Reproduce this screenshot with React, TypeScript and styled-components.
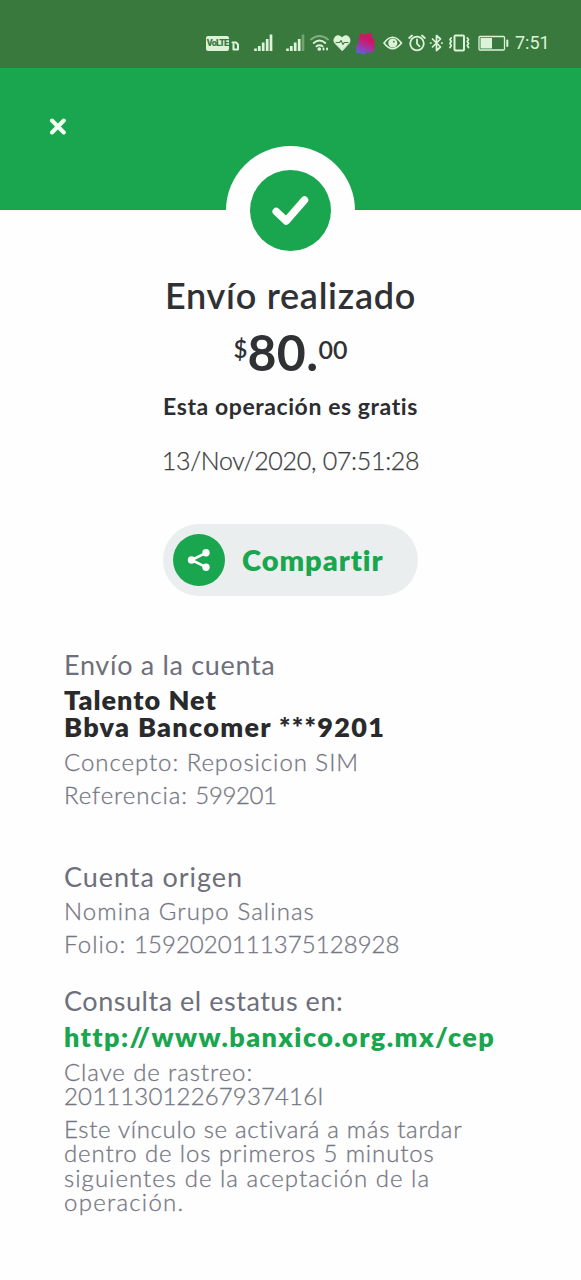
import React from "react";
import styled, { createGlobalStyle } from "styled-components";

const GREEN = "#19a64f";
const PALE = "#dcf3d8";

const Global = createGlobalStyle`
  body { margin: 0; background: #fefefe; font-family: Lato, "Open Sans", sans-serif; }
`;

const Screen = styled.div`
  display: flex;
  flex-direction: column;
  height: 1280px;
  overflow: hidden;
`;

const StatusBar = styled.div`
  display: flex;
  align-items: flex-start;
  box-sizing: border-box;
  height: 68px;
  padding: 19px 0 0 206px;
  background: #39793d;
`;

const Glyph = styled.svg<{ $gap?: number }>`
  display: block;
  flex: none;
  margin-left: ${(p) => p.$gap ?? 0}px;
  margin-top: 12px;
  fill: none;
  stroke: ${PALE};
  stroke-linecap: round;
  stroke-linejoin: round;
`;

const BarsGlyph = styled(Glyph)`
  stroke-linecap: butt;
`;

const VolteTag = styled.span`
  flex: none;
  width: 23px;
  height: 15px;
  margin-top: 17px;
  border-radius: 2px;
  background: ${PALE};
  color: #39793d;
  font: 900 9px/15px Roboto, sans-serif;
  letter-spacing: -0.8px;
  text-align: center;
  white-space: nowrap;
`;

const Clock = styled.span`
  margin: 13px 0 0 6px;
  color: ${PALE};
  font: 400 18px/22px Roboto, sans-serif;
`;

const Header = styled.header`
  position: relative;
  box-sizing: border-box;
  height: 142px;
  padding: 50px 0 0 49px;
  background: ${GREEN};
`;

const CloseButton = styled.button`
  display: block;
  padding: 0;
  border: 0;
  background: none;
`;

const Badge = styled.div`
  position: absolute;
  left: 50%;
  bottom: -65px;
  display: flex;
  align-items: center;
  justify-content: center;
  width: 129px;
  height: 129px;
  margin-left: -65px;
  border-radius: 50%;
  background: #fefefe;
`;

const BadgeDisc = styled.div`
  width: 81px;
  height: 81px;
  border-radius: 50%;
  background: ${GREEN};
`;

const Summary = styled.section`
  display: flex;
  flex-direction: column;
  align-items: center;
  padding-top: 63px;
`;

type LineProps = { $size: number; $line: number; $gap?: number; $track?: number };

const Line = styled.p<LineProps>`
  margin: ${(p) => p.$gap ?? 0}px 0 0;
  font-size: ${(p) => p.$size}px;
  line-height: ${(p) => p.$line}px;
  letter-spacing: ${(p) => p.$track ?? 0}px;
  white-space: nowrap;
`;

const Digits = styled.span<{ $track: number }>`
  letter-spacing: ${(p) => p.$track}px;
`;

const Title = styled(Line)`
  color: #303134;
  font-weight: 600;
`;

const Strong = styled(Line)`
  color: #2c2d30;
  font-weight: 700;
`;

const Stamp = styled(Line)`
  color: #3c3d41;
  font-weight: 300;
  -webkit-text-stroke: 0.25px currentColor;
`;

const Amount = styled.div`
  display: flex;
  align-items: flex-start;
  height: 60px;
  margin-top: 5px;
  color: #303134;
`;

const Units = styled.span`
  font-size: 50px;
  font-weight: 700;
  line-height: 60px;
  letter-spacing: 0.4px;
`;

const Small = styled.span<{ $size: number; $top: number }>`
  margin-top: ${(p) => p.$top}px;
  font-size: ${(p) => p.$size}px;
  font-weight: 600;
  line-height: 30px;
`;

const ShareButton = styled.button`
  display: flex;
  align-items: center;
  box-sizing: border-box;
  width: 255px;
  height: 72px;
  margin: 49px 0 0;
  padding: 0 0 0 10px;
  border: 0;
  border-radius: 36px;
  background: #eaeeee;
`;

const ShareDisc = styled.span`
  display: flex;
  align-items: center;
  justify-content: center;
  width: 52px;
  height: 52px;
  border-radius: 50%;
  background: ${GREEN};
`;

const ShareLabel = styled.span`
  margin-left: 17px;
  color: ${GREEN};
  font: 800 29px/36px Lato, sans-serif;
  letter-spacing: 0.95px;
`;

const Details = styled.main`
  display: flex;
  flex-direction: column;
  align-items: flex-start;
  padding: 53px 0 0 64px;
`;

const Heading = styled(Line)`
  color: #6d6f7b;
  font-weight: 400;
`;

const Name = styled(Line)`
  color: #2a2a2c;
  font-weight: 800;
`;

const Body = styled(Line)`
  color: #757783;
  font-weight: 300;
  -webkit-text-stroke: 0.3px currentColor;
`;

const Link = styled(Line)`
  color: ${GREEN};
  font-weight: 800;
`;

function Signal({ gap, dimLast }: { gap: number; dimLast?: boolean }) {
  return (
    <BarsGlyph $gap={gap} width="19" height="24" viewBox="0 0 19 24" strokeWidth="2.7">
      <path d="M1.500 20v-2.500M5.300 20v-5M9.200 20v-8.500M13.200 20V8" />
      <path d="M17 20V3.500" opacity={dimLast ? 0.35 : 1} />
    </BarsGlyph>
  );
}

function StatusIcons() {
  return (
    <>
      <VolteTag>VoLTE</VolteTag>
      <Glyph $gap={2} width="9" height="24" viewBox="0 0 9 24" strokeWidth="2">
        <path d="M1.500 11.500h3.500l2 2v5H2.500v-5" />
      </Glyph>
      <Signal gap={14} />
      <Signal gap={13} dimLast />
      <Glyph $gap={5} width="20" height="24" viewBox="0 0 20 24" strokeWidth="1.900">
        <path d="M1 8.500Q9.500 1.500 18 8.500" opacity="0.45" />
        <path d="M3.700 12q5.800-5 11.600 0M6.500 15.300q3-2.300 6 0" />
        <circle cx="9.300" cy="18" r="0.900" />
        <path d="M13.500 17.500v1M17 17.500v1" />
      </Glyph>
      <Glyph $gap={3} width="18" height="24" viewBox="0 0 18 24" strokeWidth="1">
        <path d="M9 19.500 2 12.300C-1 8.500 3 2.500 7.500 5.500L9 6.800l1.500-1.300C15 2.500 19 8.500 16 12.300Z" fill={PALE} />
        <path d="M3 11.500h3.500L8 9.500l2 4 1.300-2H15" stroke="#39793d" strokeWidth="1.100" />
      </Glyph>
      <Glyph $gap={4} width="21" height="26" viewBox="0 0 21 26">
        <defs>
          <linearGradient id="app" x1="0.65" y1="0" x2="0.25" y2="1">
            <stop offset="0.3" stopColor="#cc1765" />
            <stop offset="0.62" stopColor="#a633a0" />
            <stop offset="1" stopColor="#5865dc" />
          </linearGradient>
        </defs>
        <path d="M4.500 2.500 10 3.500 16 1.500l1 4.500 2.500 3v10l-3 3-4-1-3 2.500L1 21.500V15l3-3.500L2.500 8 5 6Z" fill="url(#app)" stroke="none" />
      </Glyph>
      <Glyph $gap={7} width="20" height="24" viewBox="0 0 20 24" strokeWidth="1.700">
        <path d="M1 12Q9.500 0.500 18.500 12 9.500 23.500 1 12Z" />
        <circle cx="9.800" cy="12" r="3.700" fill={PALE} />
        <circle cx="10.800" cy="10.700" r="0.900" fill="#39793d" stroke="none" />
      </Glyph>
      <Glyph $gap={5} width="18" height="24" viewBox="0 0 18 24" strokeWidth="1.800">
        <circle cx="9" cy="12.500" r="6.800" />
        <path d="M9 8.500v4.200l2.500 2.600M1.200 7 4 4.500M16.800 7 14 4.500" />
      </Glyph>
      <Glyph $gap={3} width="15" height="24" viewBox="0 0 15 24" strokeWidth="1.700">
        <path d="M3.500 8l8 8L7.500 19.500v-15L11.500 8l-8 8M1.500 12h0.500M12.700 12h0.500" />
      </Glyph>
      <Glyph $gap={4} width="23" height="24" viewBox="0 0 23 24" strokeWidth="2">
        <rect x="6.500" y="4.500" width="9.500" height="15" rx="1" />
        <path d="M3.200 7 2 8.500l1.200 2-1.200 2 1.200 2-1.200 2M19.300 7l1.200 1.500-1.200 2 1.200 2-1.200 2 1.200 2" strokeWidth="1.800" />
      </Glyph>
      <Glyph $gap={7} width="31" height="24" viewBox="0 0 31 24" strokeWidth="1.300">
        <rect x="1" y="5.500" width="25.500" height="13.500" rx="1" />
        <path d="M2.500 7H14v10.500H2.500Z" fill={PALE} stroke="none" />
        <path d="M29.300 9.500v5.500" strokeWidth="2" />
      </Glyph>
      <Clock>7:51</Clock>
    </>
  );
}

export default function App() {
  return (
    <Screen>
      <Global />
      <StatusBar>
        <StatusIcons />
      </StatusBar>
      <Header>
        <CloseButton aria-label="Cerrar">
          <svg width="18" height="17" viewBox="0 0 18 17" display="block">
            <path d="M3 2.500l11.800 12M14.800 2.500 3 14.500" stroke="#f4fff4" strokeWidth="4" strokeLinecap="round" />
          </svg>
        </CloseButton>
        <Badge>
          <BadgeDisc>
            <svg width="81" height="81" viewBox="0 0 81 81" display="block">
              <path d="M26.200 41.500 36.200 51 54.500 30" fill="none" stroke="#fefefe" strokeWidth="7.500" strokeLinecap="round" strokeLinejoin="round" />
            </svg>
          </BadgeDisc>
        </Badge>
      </Header>
      <Summary>
        <Title $size={36} $line={44} $track={0.72}>Envío realizado</Title>
        <Amount>
          <Small $size={24} $top={12}>$</Small>
          <Units>80.</Units>
          <Small $size={25} $top={12}>00</Small>
        </Amount>
        <Strong $size={23} $line={28} $gap={10} $track={0.58}>Esta operación es gratis</Strong>
        <Stamp $size={25} $line={30} $gap={25} $track={-0.3}>13/Nov/2020, 07:51:28</Stamp>
        <ShareButton>
          <ShareDisc>
            <svg width="24" height="24" viewBox="0 0 24 24" fill="#fefefe" stroke="none">
              <path d="M19 4.800 4.500 12 19 19.200" fill="none" stroke="#fefefe" strokeWidth="2.600" />
              <circle cx="19" cy="4.800" r="3.700" />
              <circle cx="4.500" cy="12" r="3.700" />
              <circle cx="19" cy="19.200" r="3.700" />
            </svg>
          </ShareDisc>
          <ShareLabel>Compartir</ShareLabel>
        </ShareButton>
      </Summary>
      <Details>
        <Heading $size={27} $line={32} $track={0.68}>Envío a la cuenta</Heading>
        <Name $size={27} $line={27} $gap={5} $track={1}>Talento Net</Name>
        <Name $size={27} $line={27} $track={1.3}>Bbva Bancomer ***9201</Name>
        <Body $size={24} $line={28} $gap={8} $track={0.95}>Concepto: Reposicion SIM</Body>
        <Body $size={24} $line={28} $gap={5} $track={0.9}>
          Referencia: <Digits $track={-0.4}>599201</Digits>
        </Body>
        <Heading $size={27} $line={32} $gap={52} $track={0.94}>Cuenta origen</Heading>
        <Body $size={24} $line={28} $gap={4} $track={1.08}>Nomina Grupo Salinas</Body>
        <Body $size={24} $line={28} $gap={5} $track={1.1}>
          Folio: <Digits $track={0.06}>1592020111375128928</Digits>
        </Body>
        <Heading $size={27} $line={32} $gap={27} $track={0.53}>Consulta el estatus en:</Heading>
        <Link $size={27} $line={32} $gap={4} $track={1.38}>http://www.banxico.org.mx/cep</Link>
        <Body $size={24} $line={24} $gap={7} $track={0.9}>Clave de rastreo:</Body>
        <Body $size={24} $line={24} $track={0.15}>201113012267937416I</Body>
        <Body $size={24} $line={24.4} $gap={9} $track={0.68}>Este vínculo se activará a más tardar</Body>
        <Body $size={24} $line={24.4} $track={0.88}>dentro de los primeros 5 minutos</Body>
        <Body $size={24} $line={24.4} $track={1.03}>siguientes de la aceptación de la</Body>
        <Body $size={24} $line={24.4} $track={1.25}>operación.</Body>
      </Details>
    </Screen>
  );
}
